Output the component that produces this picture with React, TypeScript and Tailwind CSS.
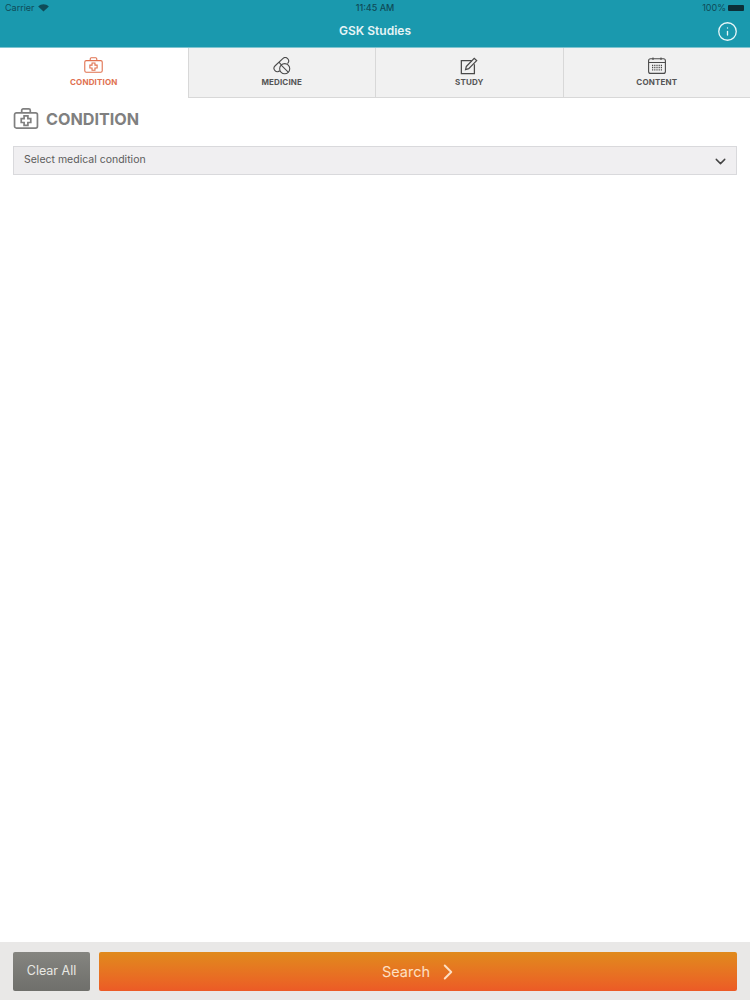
import { ChevronDown, ChevronRight, Info } from "lucide-react";

const FONT = "font-['Inter','Liberation_Sans',sans-serif]";

function CaseIcon({ className, weight = 1.4 }: { className: string; weight?: number }) {
  return (
    <svg viewBox="0 0 26 22" fill="none" stroke="currentColor" strokeWidth={weight} className={className}>
      <rect x="1" y="5" width="24" height="16" rx="2" />
      <path d="M8.500 5V2.500A1.500 1.500 0 0 1 10 1h6a1.500 1.500 0 0 1 1.500 1.500V5" />
      <path d="M11 8.200h4v3h3v4h-3v3h-4v-3H8v-4h3z" />
    </svg>
  );
}

function PillIcon({ className }: { className: string }) {
  return (
    <svg viewBox="0 0 20 20" fill="none" stroke="currentColor" strokeWidth="1.2" className={className}>
      <path d="M7.600 15.300A3.800 3.800 0 0 1 2.400 9.700L10.900 1.700A3.800 3.800 0 0 1 16.100 7.300" />
      <path d="M6.600 5.800 9.500 9" />
      <circle cx="13" cy="13" r="5.600" />
      <path d="M9.100 9.100 16.900 16.900" />
    </svg>
  );
}

function NoteIcon({ className }: { className: string }) {
  return (
    <svg viewBox="0 0 20 20" fill="none" stroke="currentColor" strokeWidth="1.4" className={className}>
      <path d="M13 4H1.500v14.500H16V8" />
      <path d="M7 10.500 15.800 1.500l2.700 2.500-8.800 9-3.500 1z" />
    </svg>
  );
}

function CalendarIcon({ className }: { className: string }) {
  return (
    <svg viewBox="0 0 18 17" fill="none" stroke="currentColor" strokeWidth="1.1" className={className}>
      <rect x="0.600" y="1.800" width="16.800" height="14.600" rx="2" />
      <path d="M0.600 5.500h16.800M5 0.500v2.600M13 0.500v2.600" />
      <path d="M4 8.500h10M4 10.700h10M4 12.900h10" strokeWidth="1.300" strokeDasharray="1.200 1" />
    </svg>
  );
}

export default function App() {
  return (
    <div className={`flex h-[1000px] w-[750px] flex-col overflow-hidden bg-white ${FONT}`}>
      <header className="h-[48px] shrink-0 border-b border-[#7fc4d0] bg-[#1a99ae] px-[5px]">
        <div className="flex h-[15px] items-center justify-between text-[9px] text-[#0f4b58]">
          <div className="flex w-[200px] items-center gap-[3px]">
            <span>Carrier</span>
            <svg viewBox="0 0 12 9" className="h-[8px] w-[11px]" fill="#0f4b58">
              <path d="M6 8.500 0 2.800C3.400-.6 8.600-.6 12 2.800z" />
            </svg>
          </div>
          <span className="font-medium">11:45 AM</span>
          <div className="flex w-[200px] items-center justify-end gap-[2px] pr-[1px]">
            <span>100%</span>
            <span className="h-[6px] w-[16px] rounded-[1px] bg-[#0c2f38]" />
          </div>
        </div>
        <div className="relative flex h-[32px] items-center justify-center">
          <span className="text-[12px] font-semibold text-[#e6f4f6]">GSK Studies</span>
          <Info className="absolute right-[7px] top-[6px] h-[21px] w-[21px] text-[#e8f6f8]" strokeWidth={1.5} />
        </div>
      </header>

      <nav className="grid h-[50px] shrink-0 grid-cols-4">
        <div className="flex flex-col items-center pt-[9px]">
          <CaseIcon className="h-[16px] w-[19px] text-[#e0714f]" weight={1.5} />
          <span className="mt-[4px] text-[8px] font-bold leading-[10px] tracking-[0.15px] text-[#e0714f]">CONDITION</span>
        </div>
        <div className="flex flex-col items-center border-b border-l border-[#d8d8d8] bg-[#f1f1f1] pt-[9px]">
          <PillIcon className="h-[18px] w-[18px] text-[#4a4a4a]" />
          <span className="mt-[2px] text-[8px] font-bold leading-[10px] tracking-[0.15px] text-[#555555]">MEDICINE</span>
        </div>
        <div className="flex flex-col items-center border-b border-l border-[#d8d8d8] bg-[#f1f1f1] pt-[9px]">
          <NoteIcon className="h-[18px] w-[18px] text-[#4a4a4a]" />
          <span className="mt-[2px] text-[8px] font-bold leading-[10px] tracking-[0.15px] text-[#555555]">STUDY</span>
        </div>
        <div className="flex flex-col items-center border-b border-l border-[#d8d8d8] bg-[#f1f1f1] pt-[9px]">
          <CalendarIcon className="h-[17px] w-[18px] text-[#4a4a4a]" />
          <span className="mt-[3px] text-[8px] font-bold leading-[10px] tracking-[0.15px] text-[#555555]">CONTENT</span>
        </div>
      </nav>

      <main className="flex-1 px-[13px]">
        <div className="flex h-[48px] items-center gap-[7px] pb-[6px]">
          <CaseIcon className="mb-[2px] h-[21px] w-[26px] text-[#808080]" weight={1.8} />
          <span className="text-[16.2px] font-bold text-[#808080]">CONDITION</span>
        </div>
        <div className="flex h-[29px] items-center justify-between border border-[#d9d9dc] bg-[#f0eff1] pb-[2px] pl-[10px] pr-[7px]">
          <span className="text-[10.5px] text-[#5c5c5c]">Select medical condition</span>
          <ChevronDown className="mt-[3px] h-[17px] w-[17px] text-[#444444]" strokeWidth={2} />
        </div>
      </main>

      <footer className="flex h-[58px] shrink-0 gap-[9px] bg-[#e9e8e7] px-[13px] pb-[9px] pt-[10px]">
        <button className="h-[39px] w-[77px] rounded-[2px] bg-gradient-to-b from-[#858580] to-[#6f6f6b] text-[12.5px] text-[#e8e8e3]">
          Clear All
        </button>
        <button className="flex h-[39px] flex-1 items-center justify-center gap-[5px] rounded-[2px] bg-gradient-to-b from-[#e08a1c] to-[#ec5a26] pl-[7px] text-[14.5px] text-[#fde0c4]">
          Search
          <ChevronRight className="h-[26px] w-[26px]" strokeWidth={1.8} />
        </button>
      </footer>
    </div>
  );
}
